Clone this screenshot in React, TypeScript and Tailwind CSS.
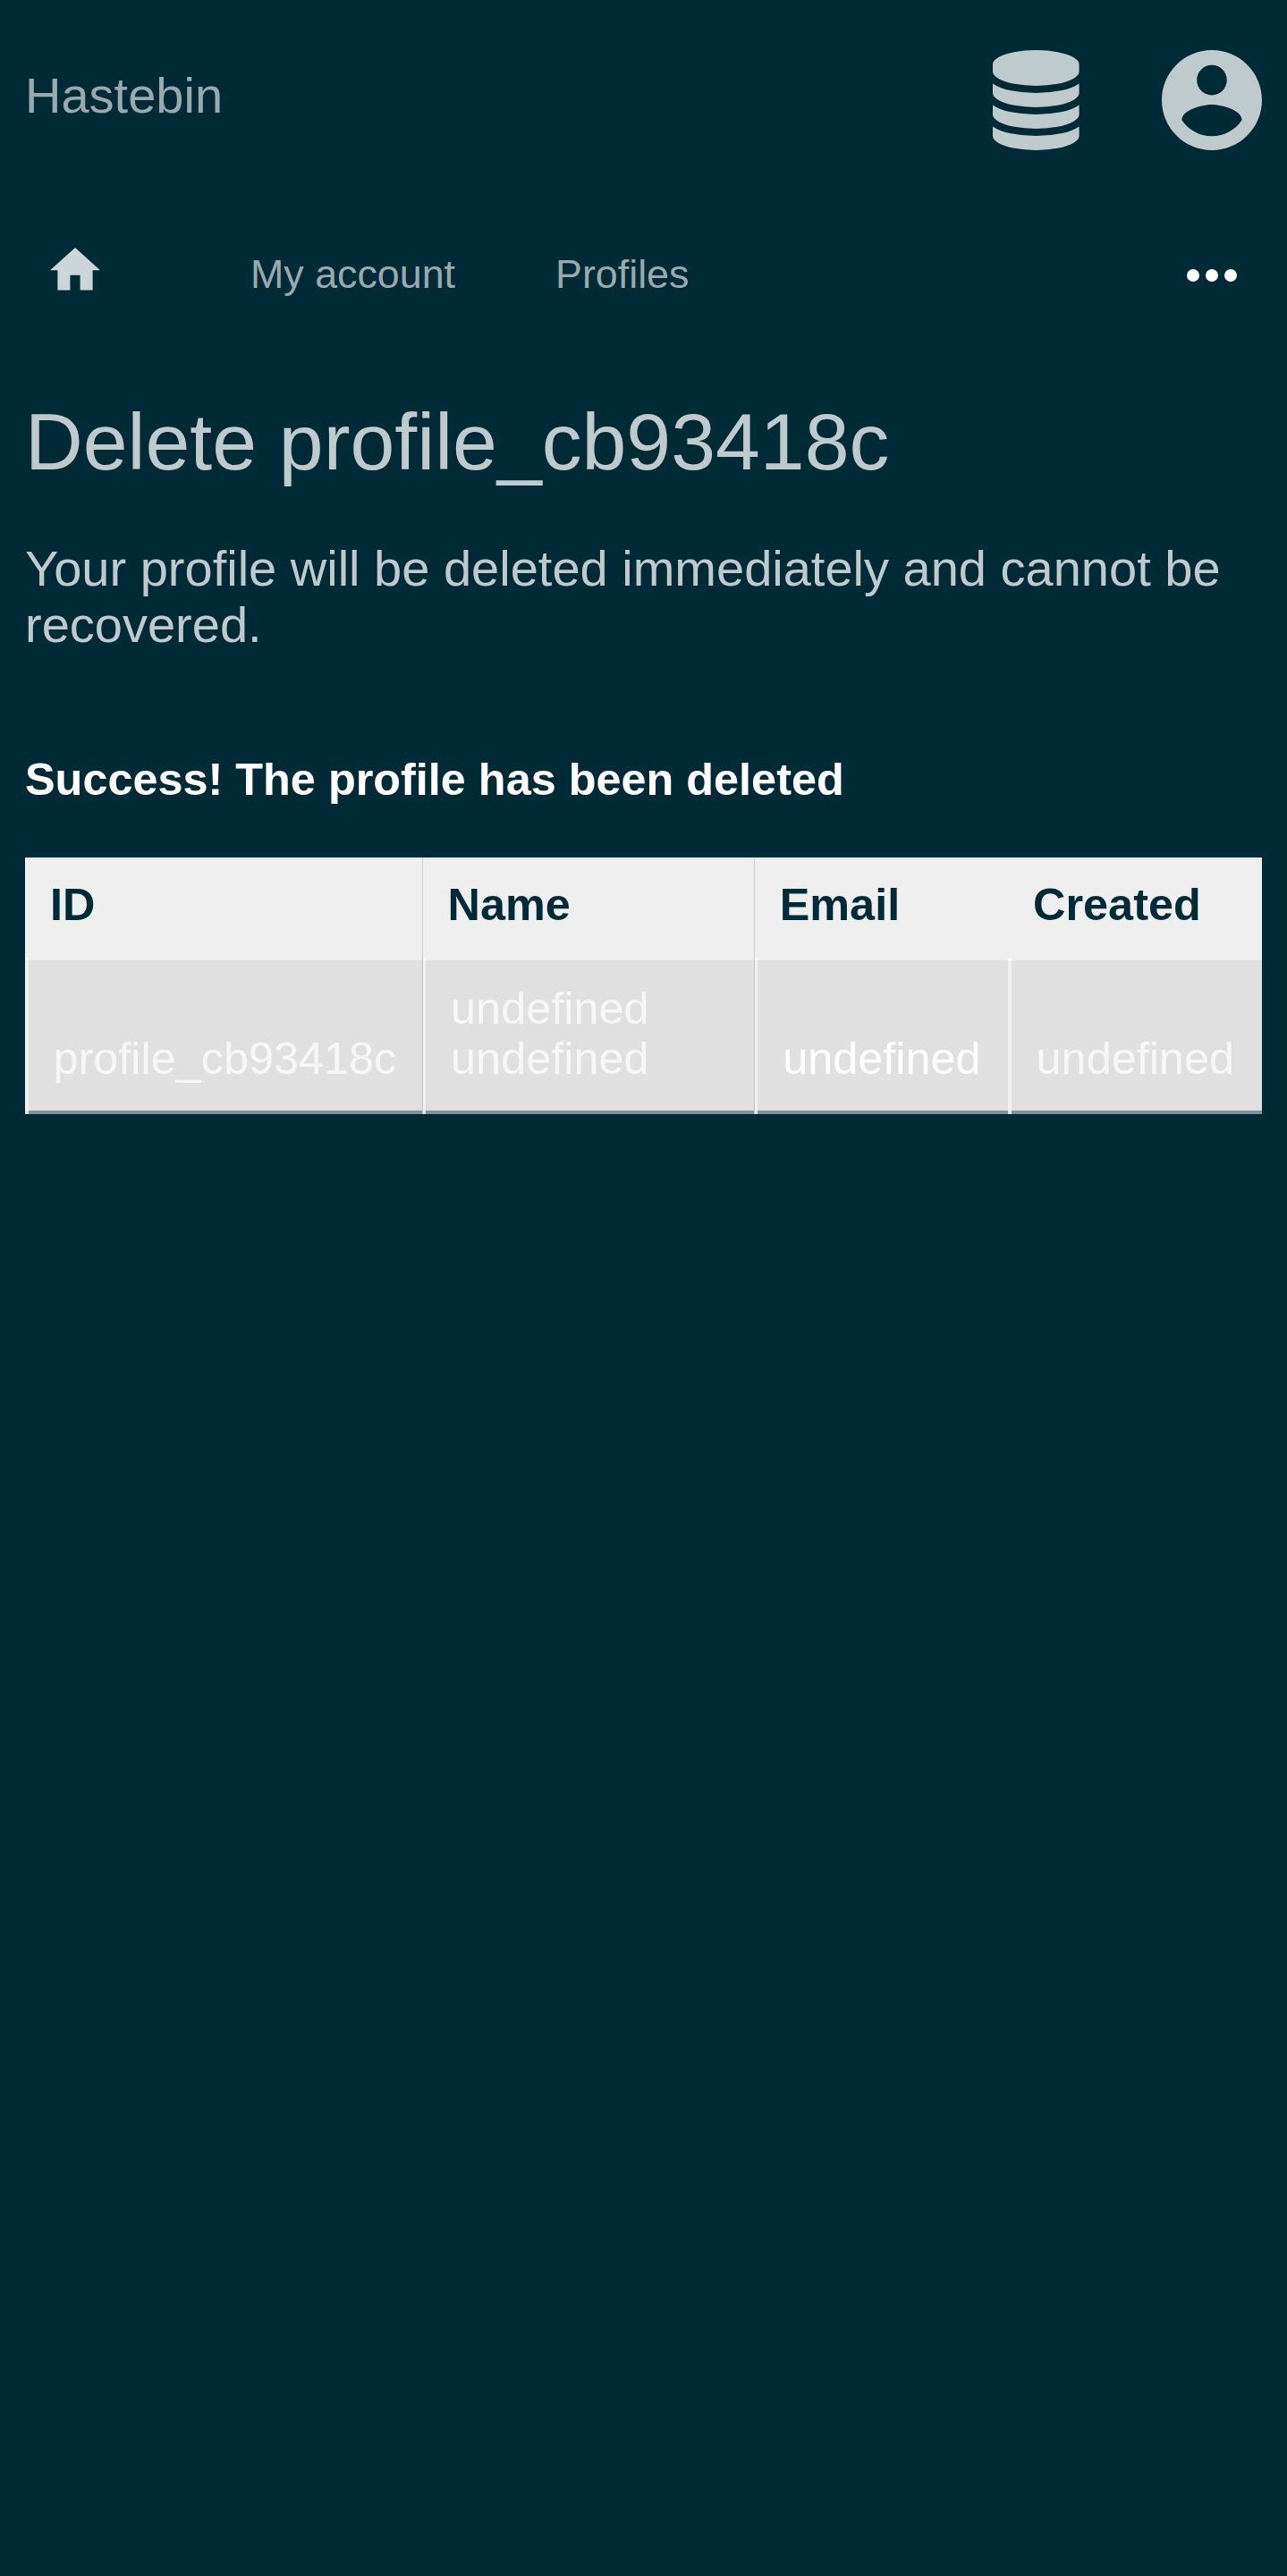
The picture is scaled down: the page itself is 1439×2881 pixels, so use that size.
import React from "react";

function DatabaseIcon() {
  return (
    <svg className="h-28 w-[96.6px]" viewBox="0 0 1536 1792" preserveAspectRatio="none" fill="currentColor">
      <path d="M768 768q237 0 443-43t325-127v170q0 69-103 128t-280 93.5-385 34.5-385-34.5-280-93.5-103-128v-170q119 84 325 127t443 43zm0 768q237 0 443-43t325-127v170q0 69-103 128t-280 93.5-385 34.5-385-34.5-280-93.5-103-128v-170q119 84 325 127t443 43zm0-384q237 0 443-43t325-127v170q0 69-103 128t-280 93.5-385 34.5-385-34.5-280-93.5-103-128v-170q119 84 325 127t443 43zm0-1152q208 0 385 34.5t280 93.5 103 128v128q0 69-103 128t-280 93.5-385 34.5-385-34.5-280-93.5-103-128v-128q0-69 103-128t280-93.5 385-34.5z" />
    </svg>
  );
}

function AccountIcon() {
  return (
    <svg className="size-28" viewBox="2 2 20 20" fill="currentColor">
      <path d="M12 2C6.48 2 2 6.48 2 12s4.48 10 10 10 10-4.48 10-10S17.52 2 12 2zm0 3c1.66 0 3 1.34 3 3s-1.34 3-3 3-3-1.34-3-3 1.34-3 3-3zm0 14.2c-2.5 0-4.71-1.28-6-3.22.03-1.99 4-3.08 6-3.08 1.99 0 5.97 1.09 6 3.08-1.29 1.94-3.5 3.22-6 3.22z" />
    </svg>
  );
}

const columns = [
  { label: "ID", rule: "border-r border-[#cfd4d5]" },
  { label: "Name", rule: "border-r border-[#cfd1d1]" },
  { label: "Email", rule: "" },
  { label: "Created", rule: "" },
];

const cells = [
  { lines: ["profile_cb93418c"], tone: "text-white/75", rule: "border-r border-[#bcc4c5]" },
  { lines: ["undefined", "undefined"], tone: "text-white/75", rule: "border-r border-[#c3c5c6]" },
  { lines: ["undefined"], tone: "text-white", rule: "" },
  { lines: ["undefined"], tone: "text-white/75", rule: "" },
];

export default function App() {
  return (
    <div className="min-h-[2881px] w-full bg-[#002b36] pr-[28.3px] pl-7 font-['Liberation_Sans',Arial,sans-serif] text-[#bfcacd]">
      <header className="flex h-[224px] items-start justify-between pt-14">
        <a className="mt-[19px] text-[56px] leading-[63px] text-[#99aaaf]">Hastebin</a>
        <div className="flex gap-[92px]">
          <DatabaseIcon />
          <AccountIcon />
        </div>
      </header>

      <nav className="flex h-[168px] items-start px-7 text-[44.8px] leading-[51px] text-[#99aaaf]">
        <svg className="mt-[53px] h-[47.6px] w-14 text-[#ccd5d7]" viewBox="2 3 20 17" fill="currentColor">
          <path d="M10 20v-6h4v6h5v-8h3L12 3 2 12h3v8z" />
        </svg>
        <a className="mt-[57px] ml-[168px]">My account</a>
        <a className="mt-[57px] ml-[112px]">Profiles</a>
        <svg className="mt-[77px] ml-auto h-[14px] w-14 text-white" viewBox="0 0 56 14" fill="currentColor">
          <circle cx="7" cy="7" r="7" />
          <circle cx="28" cy="7" r="7" />
          <circle cx="49" cy="7" r="7" />
        </svg>
      </nav>

      <main>
        <h1 className="pt-[51px] text-[89.6px] leading-[102px]">Delete profile_cb93418c</h1>
        <p className="mt-[59px] text-[56px] leading-[63px]">
          Your profile will be deleted immediately and cannot be recovered.
        </p>
        <p className="mt-[114px] text-[50.4px] leading-[56px] font-bold text-white">
          Success! The profile has been deleted
        </p>

        <div className="mt-[59px]">
          <div className="grid h-[112px] grid-cols-[444.6px_371.1px_283.4px_283.6px] bg-[#efefef] text-[50.4px] leading-[56px] font-bold text-[#002b36]">
            {columns.map((c) => (
              <div key={c.label} className={`pt-[25px] pl-7 ${c.rule}`}>
                {c.label}
              </div>
            ))}
          </div>
          <div className="grid h-[175px] grid-cols-[444.6px_371.1px_283.4px_283.6px] bg-[#e0e0e0] text-[50.4px] leading-[56px]">
            {cells.map((cell, i) => (
              <div key={i} className={`flex ${cell.rule}`}>
                <div className="w-[3.5px] border-t-[3px] border-b-[4px] border-t-[#fafafa] border-b-[#e0e5e6] bg-[#f0f0f0]" />
                <div
                  className={`flex flex-1 flex-col justify-end border-t-[3px] border-b-[4px] border-t-[#efefef] border-b-[#80949a] pb-[30px] pl-7 ${cell.tone}`}
                >
                  {cell.lines.map((l, j) => (
                    <div key={j}>{l}</div>
                  ))}
                </div>
              </div>
            ))}
          </div>
        </div>
      </main>
    </div>
  );
}
